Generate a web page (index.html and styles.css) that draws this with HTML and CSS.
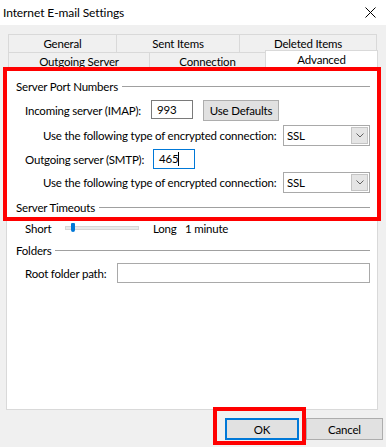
FILE: index.html
```html
<!DOCTYPE html>
<html>
<head>
<meta charset="utf-8">
<link rel="stylesheet" href="styles.css">
</head>
<body>
<div class="window">
  <div class="titlebar">
    <span class="title">Internet E-mail Settings</span>
    <svg class="close" width="11" height="11" viewBox="0 0 11 11"><path d="M0.5 0.5 L10.5 10.5 M10.5 0.5 L0.5 10.5" stroke="#000" stroke-width="1" fill="none"/></svg>
  </div>
  <div class="tabs">
    <div class="tabrow">
      <div class="tab w-general">General</div>
      <div class="tab w-sent">Sent Items</div>
      <div class="tab w-deleted">Deleted Items</div>
    </div>
    <div class="tabrow">
      <div class="tab w-out">Outgoing Server</div>
      <div class="tab w-conn">Connection</div>
      <div class="tab w-adv active">Advanced</div>
    </div>
  </div>
  <div class="panel">
    <div class="group-head gh-ports"><span>Server Port Numbers</span><i class="rule"></i></div>
    <div class="row r-imap">
      <span class="lbl w-imap">Incoming server (IMAP):</span>
      <div class="input w-port">993</div>
      <div class="btn defaults">Use Defaults</div>
    </div>
    <div class="row r-enc1">
      <span class="lbl w-enc">Use the following type of encrypted connection:</span>
      <div class="select"><span>SSL</span><div class="drop"><svg width="8" height="5" viewBox="0 0 8 5"><path d="M0.5 0.5 L4 4 L7.5 0.5" stroke="#606060" fill="none" stroke-width="1"/></svg></div></div>
    </div>
    <div class="row r-smtp">
      <span class="lbl w-smtp">Outgoing server (SMTP):</span>
      <div class="input w-port focus"><span class="caret">465</span></div>
    </div>
    <div class="row r-enc2">
      <span class="lbl w-enc">Use the following type of encrypted connection:</span>
      <div class="select"><span>SSL</span><div class="drop"><svg width="8" height="5" viewBox="0 0 8 5"><path d="M0.5 0.5 L4 4 L7.5 0.5" stroke="#606060" fill="none" stroke-width="1"/></svg></div></div>
    </div>
    <div class="group-head gh-time"><span>Server Timeouts</span><i class="rule"></i></div>
    <div class="row r-slider">
      <span class="lbl w-short">Short</span>
      <div class="track"><i class="thumb"></i></div>
      <span class="lbl w-long">Long</span>
      <span class="lbl">1 minute</span>
    </div>
    <div class="group-head gh-folders"><span>Folders</span><i class="rule"></i></div>
    <div class="row r-root">
      <span class="lbl w-root">Root folder path:</span>
      <div class="input w-path"></div>
    </div>
  </div>
  <div class="buttons">
    <div class="btn ok">OK</div>
    <div class="btn cancel">Cancel</div>
  </div>
</div>
<div class="mark mark-ports"></div>
<div class="mark mark-ok"></div>
</body>
</html>
```
FILE: styles.css
```css
* { box-sizing: border-box; }
html, body { margin: 0; padding: 0; }
body {
  width: 386px;
  height: 447px;
  overflow: hidden;
  background: #f0f0f0;
  font-family: Lato, "Noto Sans", sans-serif;
  font-size: 11.5px;
  letter-spacing: -0.2px;
  color: #000;
  position: relative;
}
.titlebar {
  height: 25px;
  background: #fff;
  display: flex;
  align-items: center;
  padding-left: 3px;
  padding-right: 10px;
}
.title { flex: 1; font-size: 12px; letter-spacing: -0.1px; }
.close { display: block; }

.tabs { margin-top: 9px; padding-left: 8px; }
.tabrow { display: flex; height: 18px; }
.tab {
  height: 18px;
  border: 1px solid #d9d9d9;
  border-bottom: none;
  margin-left: -1px;
  display: flex;
  align-items: center;
  justify-content: center;
  line-height: 1;
  background: #f0f0f0;
}
.tab:first-child { margin-left: 0; }
.w-general { width: 109px; }
.w-sent { width: 124px; }
.w-deleted { width: 138px; }
.w-out { width: 142px; }
.w-conn { width: 117px; }
.w-adv { width: 113px; }
.tab.active {
  background: #fff;
  height: 21px;
  margin-top: -2px;
  position: relative;
  z-index: 2;
  padding-bottom: 3px;
}

.panel {
  margin-left: 6px;
  width: 372px;
  height: 340px;
  background: #fff;
  border: 1px solid #d9d9d9;
  padding: 0 7px 0 0;
  position: relative;
  z-index: 1;
}
.group-head {
  height: 20px;
  display: flex;
  align-items: center;
  padding-left: 9px;
}
.rule { flex: 1; height: 1px; background: #a0a0a0; margin-left: 4px; }
.gh-ports { margin-top: 5px; }
.gh-time { margin-top: 4px; }
.gh-folders { margin-top: 2px; }

.row { display: flex; align-items: center; padding-left: 18px; }
.r-imap { margin-top: 4px; height: 21px; }
.r-enc1 { margin-top: 4px; height: 21px; padding-left: 36px; }
.r-smtp { margin-top: 3px; height: 20px; }
.r-enc2 { margin-top: 3px; height: 21px; padding-left: 36px; }
.r-slider { margin-top: 1px; height: 20px; }
.r-root { margin-top: 3px; height: 20px; }

.lbl { white-space: nowrap; flex: none; }
.w-imap { width: 126px; }
.w-smtp { width: 128px; }
.w-enc { width: 240px; }
.w-short { width: 40px; }
.w-long { width: 32px; margin-left: 14px; }
.w-root { width: 92px; }

.input {
  height: 100%;
  border: 1px solid #7a7a7a;
  background: #fff;
  padding-left: 5px;
  display: flex;
  align-items: center;
  flex: none;
}
.w-port { width: 42px; }
.r-imap .input { height: 19px; align-self: flex-start; }
.input.focus { border-color: #0078d7; }
.caret { border-right: 1px solid #000; padding-right: 0; line-height: 14px; }
.w-path { width: 253px; border-color: #a9a9a9; }

.btn {
  background: #e1e1e1;
  border: 1px solid #adadad;
  display: flex;
  align-items: center;
  justify-content: center;
  flex: none;
}
.defaults { width: 76px; height: 21px; margin-left: 10px; }

.select {
  width: 87px;
  height: 21px;
  border: 1px solid #a9a9a9;
  background: #fff;
  display: flex;
  align-items: center;
  padding-left: 3px;
  padding-right: 1px;
}
.select span { flex: 1; }
.drop {
  width: 17px;
  height: 17px;
  background: #e5e5e5;
  border: 1px solid #c4c4c4;
  display: flex;
  align-items: center;
  justify-content: center;
}
.drop svg { display: block; }

.track {
  width: 74px;
  height: 4px;
  background: #e7eaea;
  border: 1px solid #d6d6d6;
  position: relative;
  flex: none;
}
.thumb {
  position: absolute;
  left: 5px;
  top: -4px;
  width: 4px;
  height: 9px;
  background: #0078d7;
  border-radius: 1px 1px 2px 2px;
}

.buttons {
  display: flex;
  justify-content: flex-end;
  gap: 7px;
  margin-top: 8px;
  padding-right: 3px;
}
.ok { width: 74px; height: 22px; border: 1px solid #0078d7; box-shadow: inset 0 0 0 1px #0078d7; }
.cancel { width: 77px; height: 22px; }

.mark { position: absolute; border: 4px solid #ff0000; z-index: 5; pointer-events: none; }
.mark-ports { left: 3px; top: 67px; width: 378px; height: 154px; }
.mark-ok { left: 213px; top: 407px; width: 93px; height: 38px; }
```
